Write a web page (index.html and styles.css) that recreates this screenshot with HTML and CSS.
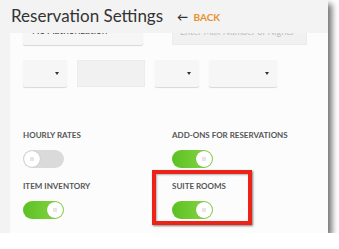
FILE: index.html
```
<!DOCTYPE html>
<html>
<head>
<meta charset="UTF-8">
<title>Reservation Settings</title>
<link rel="stylesheet" href="styles.css">
</head>
<body>
<div class="shot">
  <div class="topbar">
    <h1>Reservation Settings</h1>
    <a class="back" href="#"><span class="arrow">&#8592;</span> BACK</a>
  </div>

  <div class="panel">
    <div class="inner">
      <div class="row-top">
        <div class="field select">No Authorization</div>
        <div class="field flat placeholder">Enter Max Number of Nights</div>
      </div>

      <div class="row-sel">
        <div class="field select small"><span class="caret"></span></div>
        <div class="field flat mid"></div>
        <div class="field select small"><span class="caret"></span></div>
        <div class="field select mid"><span class="caret"></span></div>
      </div>

      <div class="toggles">
        <div class="opt">
          <div class="label">HOURLY RATES</div>
          <div class="switch"><span class="knob"></span></div>
        </div>
        <div class="opt">
          <div class="label">ADD-ONS FOR RESERVATIONS</div>
          <div class="switch on"><span class="knob"></span></div>
        </div>
        <div class="opt">
          <div class="label">ITEM INVENTORY</div>
          <div class="switch on"><span class="knob"></span></div>
        </div>
        <div class="opt marked">
          <div class="label">SUITE ROOMS</div>
          <div class="switch on"><span class="knob"></span></div>
        </div>
      </div>
    </div>
  </div>
</div>
</body>
</html>
```

FILE: styles.css
```
html, body { margin: 0; padding: 0; background: #fff; }
body{
    font-family: Lato, "Open Sans", sans-serif;
    color: #444;
}
.shot{
    position: relative;
    width: 328px;
    height: 233px;
    overflow: hidden;
    background: #f3f3f3;
    box-shadow: 4px 4px 6px rgba(0,0,0,0.55);
}
.topbar{
    position: absolute;
    top: 0; left: 0; right: 0;
    height: 33px;
    background: #f3f3f3;
    display: flex;
    align-items: center;
    padding-left: 11px;
    z-index: 2;
}
h1{
    margin: 0 0 3px 0;
    font-size: 17px;
    font-weight: normal;
    color: #333;
}
.back{
    margin-left: 14px;
    color: #e8912c;
    font-size: 10px;
    font-weight: bold;
    text-decoration: none;
}
.back .arrow{ color: #333; font-size: 11px; margin-right: 3px; }

.panel{
    margin-left: 10px;
    height: 233px;
    background: #fcfcfc;
}
.inner{ padding: 18px 0 0 13px; }

.field{
    box-sizing: border-box;
    height: 27px;
    font-size: 10px;
    line-height: 27px;
    padding-left: 9px;
    position: relative;
}
.select{
    background: #f6f6f6;
    box-shadow: 0 1px 1px rgba(0,0,0,0.15);
    border-radius: 2px;
}
.flat{
    background: #f1f1f1;
    border: 1px solid #ececec;
}
.row-top .field{ line-height: 25px; }
.placeholder{ color: #bdbdbd; padding-left: 7px; font-size: 9px; }
.row-top{ display: flex; }
.row-top .select{ width: 120px; margin-right: 29px; }
.row-top .flat{ width: 135px; }

.row-sel{ display: flex; gap: 10px; margin-top: 15px; }
.row-sel .small{ width: 44px; }
.row-sel .mid{ width: 68px; }
.caret{
    position: absolute;
    right: 8px; top: 12px;
    border-left: 2.5px solid transparent;
    border-right: 2.5px solid transparent;
    border-top: 3px solid #333;
}

.toggles{
    display: grid;
    grid-template-columns: 149px 1fr;
    row-gap: 13px;
    margin-top: 43px;
}
.label{
    font-size: 8px;
    font-weight: bold;
    color: #555;
    line-height: 10px;
}
.switch{
    margin-top: 10px;
    width: 41px;
    height: 18px;
    border-radius: 9px;
    background: #dadada;
    position: relative;
}
.switch .knob{
    position: absolute;
    top: 1px; left: 1px;
    width: 16px; height: 16px;
    border-radius: 50%;
    background: #fff;
    box-shadow: 0 0 1px rgba(0,0,0,0.3);
}
.switch .knob::after{
    content: "";
    position: absolute;
    left: 6px; top: 6px;
    width: 4px; height: 4px;
    background: #e6e6e6;
}
.switch.on{ background: linear-gradient(to right, #5cc024, #8ad844); }
.switch.on .knob{ left: auto; right: 1px; }

.marked{ position: relative; }
.marked::before{
    content: "";
    position: absolute;
    left: -20px; top: -11px;
    width: 92px; height: 47px;
    border: 4px solid #ec2417;
    box-shadow: 1px 1px 2px rgba(0,0,0,0.5), inset 1px 1px 2px rgba(0,0,0,0.3);
}
```
